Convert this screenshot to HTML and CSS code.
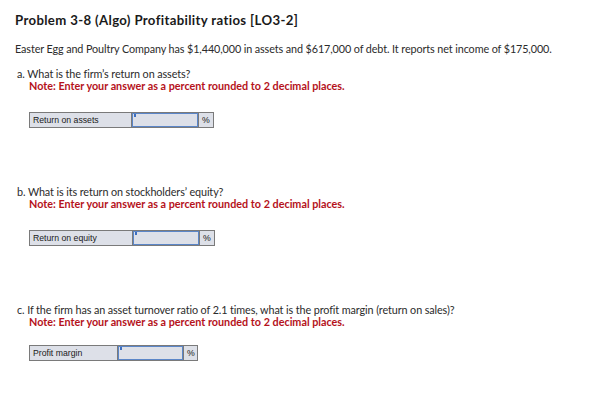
FILE: index.html
```html
<!DOCTYPE html>
<html>
<head>
<meta charset="utf-8">
<link rel="stylesheet" href="styles.css">
</head>
<body>
<div class="page">
  <h1 class="title">Problem 3-8 (Algo) Profitability ratios [LO3-2]</h1>
  <p class="intro">Easter Egg and Poultry Company has $1,440,000 in assets and $617,000 of debt. It reports net income of $175,000.</p>

  <div class="q q-a">
    <div class="q-text">a. What is the firm’s return on assets?</div>
    <div class="note">Note: Enter your answer as a percent rounded to 2 decimal places.</div>
    <div class="answer ans-a">
      <div class="cell label">Return on assets</div>
      <div class="cell input"><span class="mark"></span></div>
      <div class="cell unit">%</div>
    </div>
  </div>

  <div class="q q-b">
    <div class="q-text">b. What is its return on stockholders’ equity?</div>
    <div class="note">Note: Enter your answer as a percent rounded to 2 decimal places.</div>
    <div class="answer ans-b">
      <div class="cell label">Return on equity</div>
      <div class="cell input"><span class="mark"></span></div>
      <div class="cell unit">%</div>
    </div>
  </div>

  <div class="q q-c">
    <div class="q-text">c. If the firm has an asset turnover ratio of 2.1 times, what is the profit margin (return on sales)?</div>
    <div class="note">Note: Enter your answer as a percent rounded to 2 decimal places.</div>
    <div class="answer ans-c">
      <div class="cell label">Profit margin</div>
      <div class="cell input"><span class="mark"></span></div>
      <div class="cell unit">%</div>
    </div>
  </div>
</div>
</body>
</html>
```
FILE: styles.css
```css
html, body {
  margin: 0;
  padding: 0;
  background: #ffffff;
}
.page {
  padding: 13px 15px 0 15px;
  font-family: Lato, "Open Sans", sans-serif;
  color: #2b2b2b;
}
.title {
  margin: 0;
  font-size: 13.2px;
  line-height: 14px;
  font-weight: 700;
  letter-spacing: 0.35px;
  color: #1a1a1a;
}
.intro {
  margin: 15px 0 0 0;
  font-size: 10.8px;
  line-height: 13px;
  letter-spacing: -0.1px;
}
.q {
  font-size: 10.8px;
  line-height: 12px;
}
.q-a { margin-top: 13px; }
.q-b { margin-top: 58px; }
.q-c { margin-top: 58px; }
.q-text {
  padding-left: 2px;
  letter-spacing: -0.1px;
}
.note {
  padding-left: 14px;
  color: #b5121b;
  font-weight: 700;
}
.answer {
  display: flex;
  margin-left: 14px;
  height: 16px;
  border: 1px solid #7a7a7a;
  box-sizing: border-box;
  width: max-content;
  background: #dde0e8;
  font-family: "Liberation Sans", Arial, sans-serif;
  font-size: 8.7px;
  color: #1a1a1a;
}
.ans-a, .ans-b { margin-top: 20px; }
.ans-c { margin-top: 17px; }
.cell {
  box-sizing: border-box;
  height: 14px;
  line-height: 14px;
}
.label {
  padding-left: 3px;
  border-right: 1px solid #7a7a7a;
}
.ans-a .label { width: 102px; }
.ans-b .label { width: 103px; }
.ans-c .label { width: 88px; }
.input {
  position: relative;
  width: 66px;
  border: 1px solid #5b86c8;
}
.ans-c .input { width: 65px; }
.mark {
  position: absolute;
  left: 1px;
  top: 0;
  width: 2px;
  height: 3px;
  background: #3d6fc0;
}
.unit {
  width: 15px;
  padding-left: 3px;
  border-left: 1px solid #7a7a7a;
}
.ans-c .unit { width: 14px; }
```
